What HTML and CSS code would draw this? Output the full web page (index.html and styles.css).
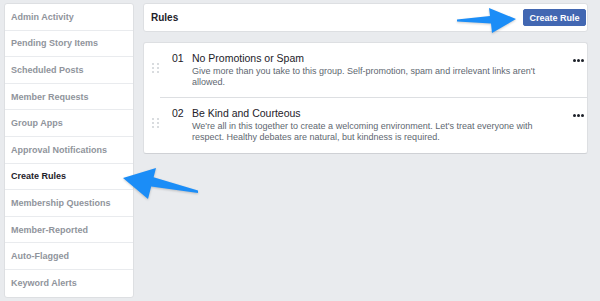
FILE: index.html
```html
<!DOCTYPE html>
<html lang="en">
<head>
    <meta charset="UTF-8">
    <meta name="viewport" content="width=device-width, initial-scale=1.0">
    <title>Group Rules</title>
    <link rel="stylesheet" href="styles.css">
</head>
<body>
    <div class="page">
        <nav class="sidebar">
            <a class="nav-item">Admin Activity</a>
            <a class="nav-item">Pending Story Items</a>
            <a class="nav-item">Scheduled Posts</a>
            <a class="nav-item">Member Requests</a>
            <a class="nav-item">Group Apps</a>
            <a class="nav-item">Approval Notifications</a>
            <a class="nav-item active">Create Rules</a>
            <a class="nav-item">Membership Questions</a>
            <a class="nav-item">Member-Reported</a>
            <a class="nav-item">Auto-Flagged</a>
            <a class="nav-item">Keyword Alerts</a>
        </nav>

        <main class="content">
            <header class="rules-header">
                <h2 class="rules-title">Rules</h2>
                <button class="create-btn">Create Rule</button>
            </header>

            <section class="rules-list">
                <div class="rule">
                    <div class="drag-handle">
                        <span></span><span></span><span></span><span></span><span></span><span></span>
                    </div>
                    <div class="rule-body">
                        <span class="rule-num">01</span>
                        <div class="rule-text">
                            <div class="rule-name">No Promotions or Spam</div>
                            <p class="rule-desc">Give more than you take to this group. Self-promotion, spam and irrelevant links aren't allowed.</p>
                        </div>
                        <div class="rule-menu"><span></span><span></span><span></span></div>
                    </div>
                </div>
                <div class="rule">
                    <div class="drag-handle">
                        <span></span><span></span><span></span><span></span><span></span><span></span>
                    </div>
                    <div class="rule-body">
                        <span class="rule-num">02</span>
                        <div class="rule-text">
                            <div class="rule-name">Be Kind and Courteous</div>
                            <p class="rule-desc">We're all in this together to create a welcoming environment. Let's treat everyone with respect. Healthy debates are natural, but kindness is required.</p>
                        </div>
                        <div class="rule-menu"><span></span><span></span><span></span></div>
                    </div>
                </div>
            </section>
        </main>
    </div>

    <!-- annotation arrows drawn over the screenshot -->
    <svg class="annotations" width="600" height="301" viewBox="0 0 600 301">
        <polygon class="arrow" points="516,19 489,8 490,16 457,19.5 457,21.5 491,23.5 492,33"/>
        <polygon class="arrow" points="123,178 156,168 153.6,177.3 198,190.5 198,193 151.2,186.6 148,199"/>
    </svg>
</body>
</html>
```

FILE: styles.css
```css
:root {
    --bg-page: #e9ebee;
    --bg-card: #ffffff;
    --border: #dddfe2;
    --divider: #e9ebee;
    --text-dark: #1d2129;
    --text-muted: #90949c;
    --text-body: #606770;
    --fb-blue: #4267b2;
    --arrow-blue: #1b8df7;
}

* {
    margin: 0;
    padding: 0;
    box-sizing: border-box;
}

body {
    font-family: 'Liberation Sans', Helvetica, Arial, sans-serif;
    background: var(--bg-page);
    color: var(--text-dark);
    position: relative;
    width: 600px;
    height: 301px;
    overflow: hidden;
}

.page {
    display: flex;
    align-items: flex-start;
    gap: 9px;
    padding: 3px 0 0 4px;
}

/* left navigation */
.sidebar {
    width: 130px;
    background: var(--bg-card);
    border: 1px solid var(--border);
    border-radius: 3px;
    display: flex;
    flex-direction: column;
}

.nav-item {
    display: flex;
    align-items: center;
    height: 26.6px;
    padding-left: 6px;
    border-bottom: 1px solid var(--divider);
    font-size: 9px;
    font-weight: bold;
    color: var(--text-muted);
    white-space: nowrap;
}

.nav-item:last-child {
    border-bottom: none;
}

.nav-item.active {
    color: var(--text-dark);
}

/* right column */
.content {
    width: 445px;
    display: flex;
    flex-direction: column;
    gap: 10px;
}

.rules-header {
    height: 29px;
    background: var(--bg-card);
    border: 1px solid var(--border);
    border-radius: 3px;
    display: flex;
    align-items: center;
    justify-content: space-between;
    padding: 0 1px 0 7px;
}

.rules-title {
    font-size: 10px;
    font-weight: bold;
    color: var(--text-dark);
}

.create-btn {
    width: 63px;
    height: 17px;
    background: var(--fb-blue);
    border: 1px solid var(--fb-blue);
    border-radius: 2px;
    color: #ffffff;
    font-family: inherit;
    font-size: 9px;
    font-weight: bold;
}

.rules-list {
    background: var(--bg-card);
    border: 1px solid var(--border);
    border-bottom-color: #cfd1d5;
    border-radius: 3px;
}

.rule {
    display: flex;
}

.drag-handle {
    width: 16px;
    padding-left: 8px;
    margin-top: 20px;
    display: grid;
    grid-template-columns: 2px 2px;
    grid-auto-rows: 2px;
    column-gap: 3px;
    row-gap: 2px;
    align-content: start;
}

.drag-handle span {
    background: #ccd0d5;
    border-radius: 1px;
}

.rule-body {
    flex: 1;
    display: flex;
    align-items: flex-start;
    padding: 8px 3px 10px 0;
    height: 55px;
}

.rule:first-child .rule-body {
    border-bottom: 1px solid var(--border);
}

.rule-num {
    width: 32px;
    padding-left: 12px;
    font-size: 10.5px;
    line-height: 14px;
    color: var(--text-dark);
}

.rule-text {
    flex: 1;
    padding-right: 14px;
}

.rule-name {
    font-size: 10.5px;
    line-height: 14px;
    color: var(--text-dark);
}

.rule-desc {
    margin-top: 1px;
    font-size: 9px;
    line-height: 10.5px;
    color: var(--text-body);
}

.rule-menu {
    display: flex;
    gap: 1px;
    margin-top: 8px;
}

.rule-menu span {
    width: 3px;
    height: 3px;
    border-radius: 50%;
    background: var(--text-dark);
}

.annotations {
    position: absolute;
    left: 0;
    top: 0;
    pointer-events: none;
}

.arrow {
    fill: var(--arrow-blue);
    filter: drop-shadow(0 1px 1px rgba(0, 0, 0, 0.2));
}
```
